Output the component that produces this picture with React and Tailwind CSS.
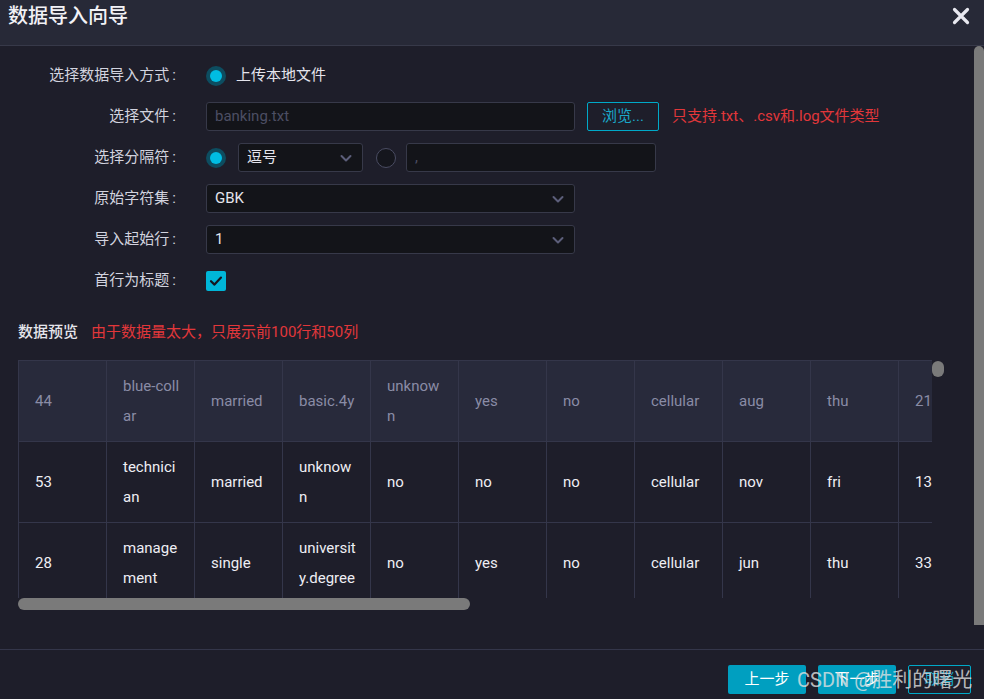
import React from 'react';

const font = { fontFamily: 'Roboto, "Noto Sans CJK SC", sans-serif' };

const header = ['44', 'blue-collar', 'married', 'basic.4y', 'unknown', 'yes', 'no', 'cellular', 'aug', 'thu', '210', '1', '999', '0', 'nonexistent'];
const rows = [
    ['53', 'technician', 'married', 'unknown', 'no', 'no', 'no', 'cellular', 'nov', 'fri', '138', '1', '999', '0', 'nonexistent'],
    ['28', 'management', 'single', 'university.degree', 'no', 'yes', 'no', 'cellular', 'jun', 'thu', '339', '3', '6', '2', 'success'],
];

function Chevron() {
    return (
        <svg width="14" height="14" viewBox="0 0 14 14" fill="none">
            <path d="M2.5 5 L7 9.5 L11.5 5" stroke="#5c5e7a" strokeWidth="2" strokeLinecap="round" strokeLinejoin="round" />
        </svg>
    );
}

function Radio({ checked, className = '' }) {
    if (checked) {
        return (
            <span className={`block w-[20px] h-[20px] rounded-full bg-[#0d4d60] flex items-center justify-center shrink-0 ${className}`}>
                <span className="block w-[12px] h-[12px] rounded-full bg-[#00bde3]" />
            </span>
        );
    }
    return <span className={`block w-[20px] h-[20px] rounded-full border-[1.5px] border-[#4a4c62] bg-[#15161d] shrink-0 ${className}`} />;
}

function Row({ label, children }) {
    return (
        <div className="flex items-center h-[29px]">
            <div className="w-[206px] pr-[30px] text-right text-[15px] text-[#d2d3df] whitespace-nowrap">
                {label}<span className="ml-[3px]">:</span>
            </div>
            {children}
        </div>
    );
}

function Select({ value, className }) {
    return (
        <div className={`h-[29px] bg-[#131419] border border-[#373949] rounded-[3px] flex items-center justify-between pl-[8px] pr-[9px] text-[15px] text-[#e4e4ec] ${className}`}>
            <span>{value}</span>
            <Chevron />
        </div>
    );
}

function Cell({ text, head }) {
    return (
        <div className={`w-[88px] shrink-0 border-r border-[#34364a] pl-[16px] pr-[13px] py-[10px] flex items-center text-[15px] leading-[30px] break-all ${head ? 'text-[#8a8ca6]' : 'text-[#eeeef4]'}`}>
            <span className="w-[58px]">{text}</span>
        </div>
    );
}

export default function App() {
    return (
        <div className="w-[984px] h-[699px] bg-[#1e1e2a] flex flex-col overflow-hidden relative" style={font}>
            {/* title bar */}
            <div className="h-[46px] shrink-0 bg-[#272937] border-b border-[#373949] flex items-start justify-between pl-[8px] pr-[14px] pt-[3px]">
                <span className="text-[20px] leading-[26px] text-[#f2f2f6] font-medium">数据导入向导</span>
                <svg width="18" height="18" viewBox="0 0 18 18" className="mt-[4px]">
                    <path d="M2.5 2.5 L15.5 15.5 M15.5 2.5 L2.5 15.5" stroke="#e8e8f0" strokeWidth="3.2" strokeLinecap="round" />
                </svg>
            </div>

            {/* body */}
            <div className="flex-1 flex min-h-0">
                <div className="flex-1 pt-[15px] pl-[18px] pr-[30px] min-w-0">
                    <div className="-ml-[18px] flex flex-col gap-[12px]">
                        <Row label="选择数据导入方式">
                            <Radio checked />
                            <span className="ml-[10px] text-[15px] text-[#e4e4ec]">上传本地文件</span>
                        </Row>
                        <Row label="选择文件">
                            <div className="w-[369px] h-[29px] bg-[#131419] border border-[#373949] rounded-[3px] flex items-center pl-[8px] text-[15px] text-[#4c4e63]">banking.txt</div>
                            <button className="ml-[12px] w-[72px] h-[29px] border border-[#00a9c8] rounded-[2px] text-[15px] text-[#1aa8c8]">浏览...</button>
                            <span className="ml-[13px] text-[15px] text-[#e2373a]">只支持.txt、.csv和.log文件类型</span>
                        </Row>
                        <Row label="选择分隔符">
                            <Radio checked />
                            <Select value="逗号" className="ml-[12px] w-[125px]" />
                            <Radio className="ml-[13px]" />
                            <div className="ml-[10px] w-[250px] h-[29px] bg-[#131419] border border-[#373949] rounded-[3px] flex items-center pl-[8px] text-[15px] text-[#4c4e63]">,</div>
                        </Row>
                        <Row label="原始字符集">
                            <Select value="GBK" className="w-[369px]" />
                        </Row>
                        <Row label="导入起始行">
                            <Select value="1" className="w-[369px]" />
                        </Row>
                        <Row label="首行为标题">
                            <span className="w-[20px] h-[20px] rounded-[2px] bg-[#00b6d8] flex items-center justify-center">
                                <svg width="14" height="14" viewBox="0 0 14 14" fill="none">
                                    <path d="M2 7.2 L5.5 10.6 L12 3.6" stroke="#15161e" strokeWidth="2.2" strokeLinecap="round" strokeLinejoin="round" />
                                </svg>
                            </span>
                        </Row>
                    </div>

                    {/* preview */}
                    <div className="mt-[27px] flex items-center text-[15px] leading-[20px]">
                        <span className="text-[#e6e6ec] font-medium">数据预览</span>
                        <span className="ml-[13px] text-[#e2373a]">由于数据量太大，只展示前100行和50列</span>
                    </div>

                    <div className="mt-[18px] flex">
                        <div className="w-[914px] shrink-0">
                            <div className="h-[238px] overflow-hidden border-l border-t border-[#34364a]">
                                <div className="flex h-[81px] bg-[#282a3b] border-b border-[#34364a] w-max">
                                    {header.map((t, i) => <Cell key={i} text={t} head />)}
                                </div>
                                {rows.map((r, ri) => (
                                    <div key={ri} className="flex h-[81px] border-b border-[#34364a] w-max">
                                        {r.map((t, i) => <Cell key={i} text={t} />)}
                                    </div>
                                ))}
                            </div>
                            <div className="h-[12px]">
                                <div className="w-[452px] h-[12px] rounded-full bg-[#7a7a7a]" />
                            </div>
                        </div>
                        <div className="w-[12px] pt-[1px]">
                            <div className="h-[16px] w-[12px] rounded-full bg-[#7a7a7a]" />
                        </div>
                    </div>
                </div>
                <div className="w-[10px] shrink-0 pb-[24px]">
                    <div className="h-full rounded-t-full bg-[#7a7a7a]" />
                </div>
            </div>

            {/* footer */}
            <div className="h-[50px] shrink-0 border-t border-[#34364a] flex items-start justify-end gap-[12px] pt-[15px] pr-[13px]">
                <button className="w-[78px] h-[29px] bg-[#009fc0] rounded-[2px] text-[15px] text-white">上一步</button>
                <button className="w-[78px] h-[29px] bg-[#009fc0] rounded-[2px] text-[15px] text-white">下一步</button>
                <button className="w-[63px] h-[29px] border border-[#00a9c8] rounded-[2px] text-[15px] text-[#1aa8c8]">取消</button>
            </div>

            {/* watermark */}
            <div className="absolute left-[797px] top-[666px] text-[20px] leading-[28px] text-[#e2e2e2]/80 whitespace-nowrap pointer-events-none">
                CSDN @胜利的曙光
            </div>
        </div>
    );
}
